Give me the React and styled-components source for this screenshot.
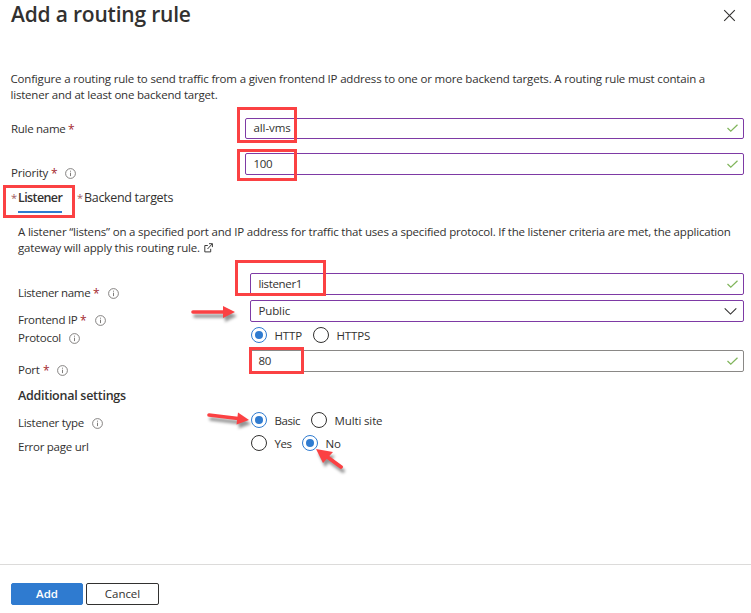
import React from "react";
import styled, { createGlobalStyle } from "styled-components";

const GlobalStyle = createGlobalStyle`
  * { box-sizing: border-box; }
  body { margin: 0; background: #fff; overflow: hidden; }
`;

const Panel = styled.div`
  position: relative;
  display: flex;
  flex-direction: column;
  width: 751px;
  height: 613px;
  overflow: hidden;
  background: #fff;
  color: #323130;
  font: 11.5px/16px "Open Sans", "Noto Sans", sans-serif;
  letter-spacing: -0.26px;
`;

const Header = styled.header`
  display: flex;
  justify-content: space-between;
  align-items: flex-start;
  height: 71px;
  padding: 0 15px 0 11px;
`;

const Title = styled.h1`
  margin: 0;
  font-size: 21px;
  line-height: 28px;
  font-weight: 600;
  letter-spacing: -0.2px;
`;

const CloseButton = styled.button`
  display: flex;
  margin: 9px 0 0;
  padding: 0;
  border: 0;
  background: none;
  color: #323130;
`;

const Text = styled.span`
  letter-spacing: ${(p) => p.$track ?? -0.26}px;
  white-space: nowrap;
`;

const Paragraph = styled.p`
  display: flex;
  flex-direction: column;
  margin: ${(p) => p.$margin};
`;

const LinkLine = styled.span`
  display: flex;
  align-items: center;
  gap: 4px;
`;

const Row = styled.div`
  display: grid;
  grid-template-columns: ${(p) => (p.$nested ? "232px 494px" : "234px 499px")};
  align-items: start;
  height: ${(p) => p.$height}px;
  margin-left: ${(p) => (p.$nested ? 18 : 11)}px;
`;

const Label = styled.label`
  display: flex;
  align-items: center;
  height: 16px;
  margin-top: ${(p) => p.$top}px;
`;

const LabelText = styled(Text)`
  width: ${(p) => p.$width}px;
`;

const Required = styled.span`
  width: 6px;
  margin-left: 3px;
  padding-top: 2px;
  color: #a4262c;
  font-size: 12px;
`;

const InfoSvg = styled.svg`
  margin-left: ${(p) => p.$gap}px;
`;

const Field = styled.div`
  display: flex;
  justify-content: space-between;
  align-items: center;
  height: ${(p) => p.$height ?? 22}px;
  padding: 0 ${(p) => (p.$select ? 6 : 5)}px ${(p) => (p.$height ? 1 : 0)}px 7.5px;
  border: 1px solid ${(p) => (p.$plain ? "#8a8886" : "#7e3aa5")};
  border-radius: 2px;
`;

const Tabs = styled.nav`
  display: flex;
  gap: 15px;
  height: 39px;
  padding: 4px 0 0 11px;
  font-size: 12.5px;
`;

const Tab = styled.div`
  display: flex;
  gap: 2px;
  height: 24px;
  line-height: 17px;
`;

const TabMark = styled.span`
  width: 5px;
  color: #a05a5e;
  font-size: 11px;
`;

const TabName = styled(Text)`
  height: 24px;
  width: ${(p) => p.$width}px;
  font-weight: ${(p) => (p.$active ? 600 : 400)};
  border-bottom: 2px solid ${(p) => (p.$active ? "#2f7bd0" : "transparent")};
`;

const Subheading = styled.h2`
  height: 24px;
  margin: 0 0 0 18px;
  font-size: 12.5px;
  line-height: 16px;
  font-weight: 600;
  letter-spacing: -0.27px;
`;

const RadioGroup = styled.div`
  display: flex;
  margin-left: 1px;
`;

const Option = styled.label`
  display: flex;
  gap: 7.5px;
  width: ${(p) => p.$width}px;
  height: 16px;
  line-height: 17px;
`;

const Dot = styled.span`
  display: flex;
  align-items: center;
  justify-content: center;
  flex: none;
  width: 16px;
  height: 16px;
  border: 1px solid ${(p) => (p.$on ? "#2f7bd0" : "#323130")};
  border-radius: 50%;
  &::after {
    content: "";
    width: 8px;
    height: 8px;
    border-radius: 50%;
    background: ${(p) => (p.$on ? "#2f7bd0" : "transparent")};
  }
`;

const Footer = styled.footer`
  display: flex;
  gap: 3px;
  height: 49px;
  margin-top: auto;
  padding: 18px 0 0 11px;
  border-top: 1px solid #dcdbda;
`;

const Button = styled.button`
  width: ${(p) => (p.$primary ? 72 : 73)}px;
  height: 22px;
  padding: 0;
  border: 1px solid ${(p) => (p.$primary ? "#2f7bd0" : "#323130")};
  border-radius: 2px;
  background: ${(p) => (p.$primary ? "#2f7bd0" : "#fff")};
  color: ${(p) => (p.$primary ? "#fff" : "#323130")};
  font: ${(p) => (p.$primary ? 600 : 400)} 11.5px/18px "Open Sans", sans-serif;
  letter-spacing: -0.05px;
`;

const Highlight = styled.div`
  position: absolute;
  left: ${(p) => p.$x}px;
  top: ${(p) => p.$y}px;
  width: ${(p) => p.$w}px;
  height: ${(p) => p.$h}px;
  border: 3px solid #fb4143;
  pointer-events: none;
`;

const ArrowLayer = styled.svg`
  position: absolute;
  left: 185px;
  top: 300px;
  pointer-events: none;
  filter: drop-shadow(2px 4px 1.5px rgba(0, 0, 0, 0.42));
`;

const Info = ({ gap = 9 }) => (
  <InfoSvg $gap={gap} width="11" height="11" viewBox="0 0 11 11" fill="none" stroke="#6f6d6b">
    <circle cx="5.5" cy="5.5" r="4.9" strokeWidth="0.85" />
    <path d="M5.5 4.7v3.4M5.5 2.7v1" strokeWidth="0.9" />
  </InfoSvg>
);

const Check = () => (
  <svg width="11" height="9" viewBox="0 0 11 9" fill="none" stroke="#81b55c" strokeWidth="1.25">
    <path d="M0.5 4L3.8 7.2L10.5 0.8" />
  </svg>
);

const Chevron = () => (
  <svg width="13" height="8" viewBox="0 0 13 8" fill="none" stroke="#323130" strokeWidth="1.1">
    <path d="M0.7 1.4L6.5 7.1L12.3 1.4" />
  </svg>
);

const External = () => (
  <svg width="9" height="10" viewBox="0 0 9 10" fill="none" stroke="#323130" strokeWidth="0.95">
    <path d="M3.8 2.5H0.8v6.4h5.9V5.8M5 0.7h3.4v3.4M8.3 0.8L3.5 6" />
  </svg>
);

const FieldLabel = ({ top, width, track, required, info, gap, children }) => (
  <Label $top={top}>
    <LabelText $width={width} $track={track}>{children}</LabelText>
    {required && <Required>*</Required>}
    {info && <Info gap={gap} />}
  </Label>
);

const Radio = ({ on, width, track, children }) => (
  <Option $width={width}>
    <Dot $on={on} />
    <Text $track={track}>{children}</Text>
  </Option>
);

export default function App() {
  return (
    <Panel>
      <GlobalStyle />
      <Header>
        <Title>Add a routing rule</Title>
        <CloseButton aria-label="Close">
          <svg width="13" height="13" viewBox="0 0 13 13" stroke="#323130" strokeWidth="1.1">
            <path d="M1.2 1.2L11.8 11.8M11.8 1.2L1.2 11.8" />
          </svg>
        </CloseButton>
      </Header>

      <Paragraph $margin="0 0 15px 10.5px">
        <Text $track={-0.178}>
          Configure a routing rule to send traffic from a given frontend IP address to one or more backend targets. A routing rule must contain a
        </Text>
        <Text $track={-0.2}>listener and at least one backend target.</Text>
      </Paragraph>

      <Row $height={35}>
        <FieldLabel top={3} width={54} track={-0.28} required>Rule name</FieldLabel>
        <Field $height={21}><Text $track={-0.1}>all-vms</Text><Check /></Field>
      </Row>
      <Row $height={32}>
        <FieldLabel top={12} width={37} track={-0.23} required info gap={8}>Priority</FieldLabel>
        <Field><Text $track={-0.3}>100</Text><Check /></Field>
      </Row>

      <Tabs>
        <Tab><TabMark>*</TabMark><TabName $active $width={44} $track={-0.6}>Listener</TabName></Tab>
        <Tab><TabMark>*</TabMark><TabName $width={90} $track={-0.32}>Backend targets</TabName></Tab>
      </Tabs>

      <Paragraph $margin="0 0 17px 18px">
        <Text $track={-0.192}>
          A listener “listens” on a specified port and IP address for traffic that uses a specified protocol. If the listener criteria are met, the application
        </Text>
        <LinkLine>
          <Text $track={-0.18}>gateway will apply this routing rule.</Text>
          <External />
        </LinkLine>
      </Paragraph>

      <Row $nested $height={27}>
        <FieldLabel top={12} width={72} track={-0.34} required info>Listener name</FieldLabel>
        <Field><Text $track={-0.35}>listener1</Text><Check /></Field>
      </Row>
      <Row $nested $height={27}>
        <FieldLabel top={12} width={59} track={-0.26} required info>Frontend IP</FieldLabel>
        <Field $select><Text $track={-0.13}>Public</Text><Chevron /></Field>
      </Row>
      <Row $nested $height={23}>
        <FieldLabel top={3} width={43} track={-0.23} info gap={8}>Protocol</FieldLabel>
        <RadioGroup>
          <Radio on width={62} track={-0.15}>HTTP</Radio>
          <Radio width={60} track={-0.15}>HTTPS</Radio>
        </RadioGroup>
      </Row>
      <Row $nested $height={38}>
        <FieldLabel top={12} width={22} track={-0.28} required info gap={8}>Port</FieldLabel>
        <Field $plain><Text $track={-0.3}>80</Text><Check /></Field>
      </Row>

      <Subheading>Additional settings</Subheading>

      <Row $nested $height={23}>
        <FieldLabel top={3} width={66} track={-0.27} info gap={8}>Listener type</FieldLabel>
        <RadioGroup>
          <Radio on width={60} track={-0.4}>Basic</Radio>
          <Radio width={80} track={-0.13}>Multi site</Radio>
        </RadioGroup>
      </Row>
      <Row $nested $height={23}>
        <FieldLabel top={4} width={71}>Error page url</FieldLabel>
        <RadioGroup>
          <Radio width={51} track={-0.4}>Yes</Radio>
          <Radio on width={60} track={-0.1}>No</Radio>
        </RadioGroup>
      </Row>

      <Footer>
        <Button $primary>Add</Button>
        <Button>Cancel</Button>
      </Footer>

      <Highlight $x={237} $y={107} $w={60} $h={36} />
      <Highlight $x={237} $y={149} $w={60} $h={32} />
      <Highlight $x={3} $y={185} $w={72} $h={33} />
      <Highlight $x={235} $y={260} $w={91} $h={36} />
      <Highlight $x={249} $y={347} $w={55} $h={27} />
      <ArrowLayer width="180" height="190" viewBox="185 300 180 190" fill="#fb4143" stroke="#fb4143">
        <path d="M193 312H225" strokeWidth="3.6" strokeLinecap="round" />
        <path d="M223 306L235 312L223 318Z" stroke="none" />
        <path d="M209 415L238 418.5" strokeWidth="3.6" strokeLinecap="round" />
        <path d="M238 412.5L249 420L236.5 424.5Z" stroke="none" />
        <path d="M341 467L326 456" strokeWidth="3.8" strokeLinecap="round" />
        <path d="M316 449L333 452L323 463Z" stroke="none" />
      </ArrowLayer>
    </Panel>
  );
}
